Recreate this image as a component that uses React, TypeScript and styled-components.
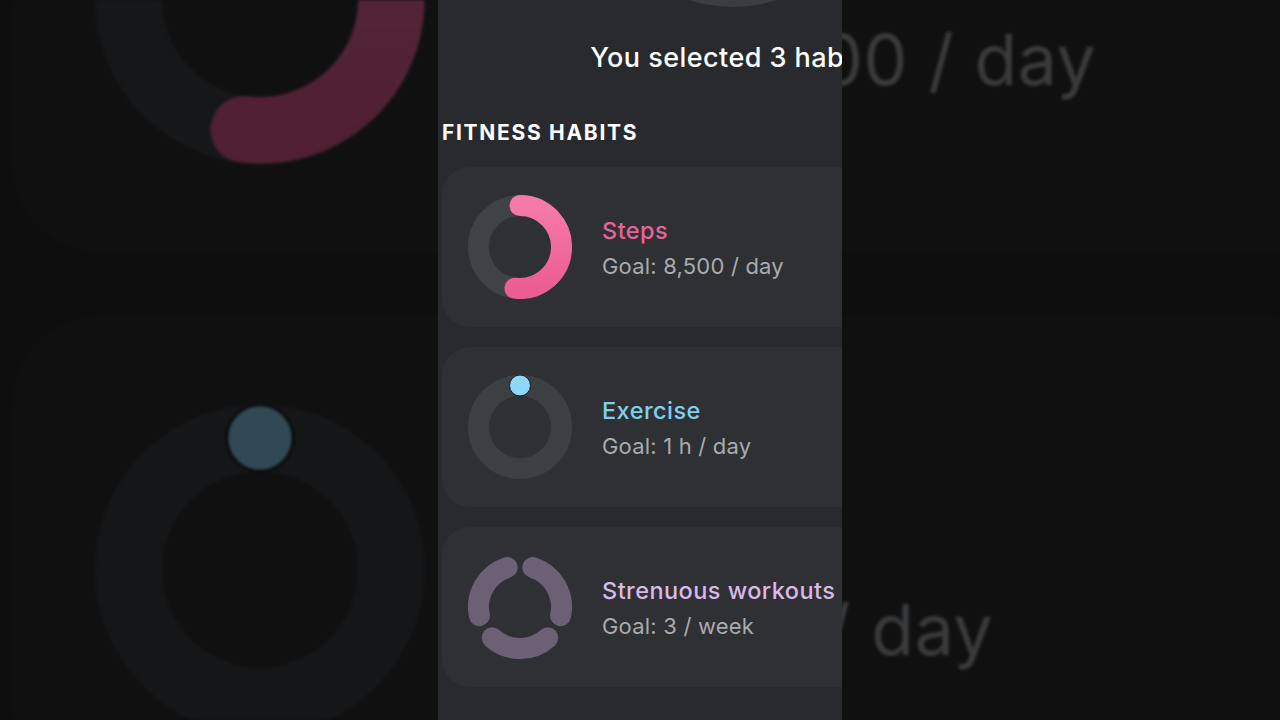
import React from "react";
import styled, { createGlobalStyle } from "styled-components";

const GlobalStyle = createGlobalStyle`
  html, body {
    margin: 0;
    padding: 0;
    background: #0e0f11;
  }
  body {
    width: 1280px;
    height: 720px;
    overflow: hidden;
    font-family: Inter, Roboto, "Noto Sans", sans-serif;
    -webkit-font-smoothing: antialiased;
  }
`;

const Stage = styled.div`
  position: relative;
  width: 1280px;
  height: 720px;
  overflow: hidden;
  background: #0e0f11;
  display: flex;
  justify-content: center;
`;

const Backdrop = styled.div`
  position: absolute;
  inset: 0;
  overflow: hidden;
  filter: brightness(0.34) blur(1.6px);
  pointer-events: none;
`;

const BackdropScale = styled.div`
  position: absolute;
  left: 0;
  top: -784px;
  transform: scale(3.17);
  transform-origin: 0 0;
`;

const Panel = styled.div`
  position: relative;
  z-index: 1;
  width: 404px;
  height: 720px;
  overflow: hidden;
  background: #282a2d;
`;

const Screen = styled.div`
  box-sizing: border-box;
  width: 590px;
  min-height: 720px;
  padding: 0 4px;
  display: flex;
  flex-direction: column;
  background: #282a2d;
`;

const TopOrb = styled.div`
  align-self: center;
  width: 280px;
  height: 280px;
  margin-top: -273px;
  border-radius: 50%;
  background: #3b3e41;
`;

const Heading = styled.h1`
  margin: 35px 0 0;
  font-size: 27px;
  line-height: 32px;
  font-weight: 500;
  letter-spacing: 0.45px;
  color: #ffffff;
  text-align: center;
  white-space: nowrap;
`;

const SectionTitle = styled.h2`
  margin: 45px 0 0;
  font-size: 21px;
  line-height: 28px;
  font-weight: 700;
  letter-spacing: 1.7px;
  color: #ffffff;
  text-transform: uppercase;
`;

const CardList = styled.div`
  margin-top: 20px;
  display: flex;
  flex-direction: column;
  gap: 20px;
`;

const Card = styled.div`
  height: 160px;
  border-radius: 28px;
  background: #2e3033;
  display: flex;
  align-items: center;
  padding-left: 26px;
  gap: 30px;
`;

const RingSvg = styled.svg`
  flex: 0 0 auto;
  width: 104px;
  height: 104px;
  display: block;
`;

const TextBlock = styled.div`
  display: flex;
  flex-direction: column;
  padding-top: 2px;
`;

const HabitName = styled.div<{ $color: string }>`
  font-size: 23.5px;
  line-height: 36px;
  font-weight: 500;
  letter-spacing: 0.45px;
  color: ${(p) => p.$color};
  white-space: nowrap;
`;

const HabitGoal = styled.div`
  font-size: 22px;
  line-height: 34px;
  font-weight: 400;
  letter-spacing: 0.2px;
  color: #a9abae;
  white-space: nowrap;
`;

const C = 52;
const R = 41.5;
const SW = 21;

function pt(deg: number) {
  const a = (deg * Math.PI) / 180;
  return [C + R * Math.sin(a), C - R * Math.cos(a)];
}

function arc(from: number, to: number) {
  const [x1, y1] = pt(from);
  const [x2, y2] = pt(to);
  const large = to - from > 180 ? 1 : 0;
  return `M ${x1.toFixed(2)} ${y1.toFixed(2)} A ${R} ${R} 0 ${large} 1 ${x2.toFixed(2)} ${y2.toFixed(2)}`;
}

function StepsRing({ id }: { id: string }) {
  return (
    <RingSvg viewBox="0 0 104 104">
      <defs>
        <linearGradient id={id} x1="0" y1="0" x2="0" y2="1">
          <stop offset="0" stopColor="#f67aa9" />
          <stop offset="1" stopColor="#ec5d93" />
        </linearGradient>
      </defs>
      <circle cx={C} cy={C} r={R} fill="none" stroke="#404346" strokeWidth={SW} />
      <path d={arc(0, 187)} fill="none" stroke={`url(#${id})`} strokeWidth={SW} strokeLinecap="round" />
    </RingSvg>
  );
}

function ExerciseRing() {
  const [x, y] = pt(0);
  return (
    <RingSvg viewBox="0 0 104 104">
      <circle cx={C} cy={C} r={R} fill="none" stroke="#3d4043" strokeWidth={SW} />
      <circle cx={x} cy={y} r={10.5} fill="#8fd8f8" stroke="#1b1d1f" strokeWidth={1} />
    </RingSvg>
  );
}

function WorkoutRing() {
  const segs: [number, number][] = [
    [18, 102],
    [138, 222],
    [258, 342],
  ];
  return (
    <RingSvg viewBox="0 0 104 104">
      {segs.map(([a, b]) => (
        <path key={a} d={arc(a, b)} fill="none" stroke="#6c6076" strokeWidth={SW} strokeLinecap="round" />
      ))}
    </RingSvg>
  );
}

type Habit = { name: string; goal: string; color: string; ring: "steps" | "exercise" | "workouts" };

const habits: Habit[] = [
  { name: "Steps", goal: "Goal: 8,500 / day", color: "#e8639a", ring: "steps" },
  { name: "Exercise", goal: "Goal: 1 h / day", color: "#7fd0f0", ring: "exercise" },
  { name: "Strenuous workouts", goal: "Goal: 3 / week", color: "#d8b9ea", ring: "workouts" },
];

function HabitScreen({ uid }: { uid: string }) {
  return (
    <Screen>
      <TopOrb />
      <Heading>You selected 3 habits</Heading>
      <SectionTitle>Fitness habits</SectionTitle>
      <CardList>
        {habits.map((h) => (
          <Card key={h.name}>
            {h.ring === "steps" && <StepsRing id={`steps-grad-${uid}`} />}
            {h.ring === "exercise" && <ExerciseRing />}
            {h.ring === "workouts" && <WorkoutRing />}
            <TextBlock>
              <HabitName $color={h.color}>{h.name}</HabitName>
              <HabitGoal>{h.goal}</HabitGoal>
            </TextBlock>
          </Card>
        ))}
      </CardList>
    </Screen>
  );
}

export default function App() {
  return (
    <>
      <GlobalStyle />
      <Stage>
        <Backdrop aria-hidden="true">
          <BackdropScale>
            <HabitScreen uid="bg" />
          </BackdropScale>
        </Backdrop>
        <Panel>
          <HabitScreen uid="fg" />
        </Panel>
      </Stage>
    </>
  );
}
